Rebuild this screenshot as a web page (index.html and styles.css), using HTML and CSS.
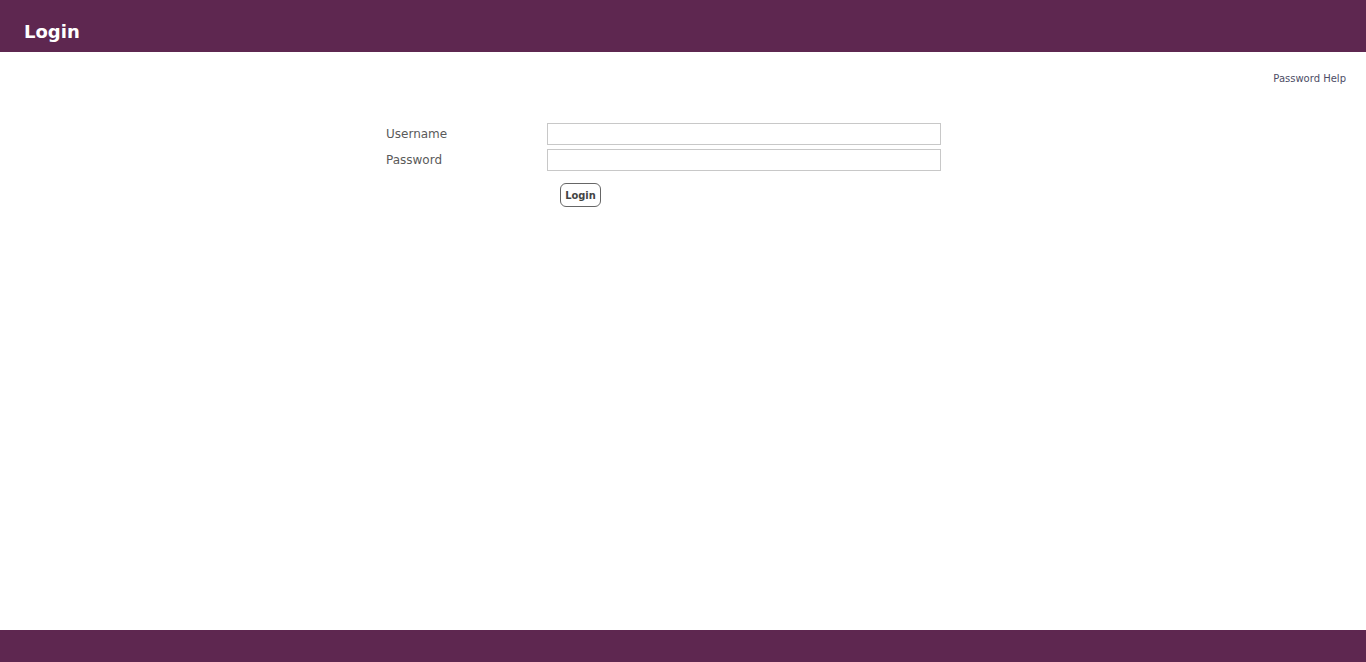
FILE: index.html
```html
<!DOCTYPE html>
<html>
<head>
<meta charset="utf-8">
<title>Login</title>
<link rel="stylesheet" href="styles.css">
</head>
<body>
<div class="page">
  <header class="topbar"><h1 class="title">Login</h1></header>
  <main class="content">
    <div class="helprow"><a class="help" href="#">Password Help</a></div>
    <form class="loginform">
      <label class="lbl" for="u">Username</label>
      <input class="field" id="u" type="text">
      <label class="lbl" for="p">Password</label>
      <input class="field" id="p" type="password">
      <div></div>
      <div class="btnrow"><button class="btn" type="button">Login</button></div>
    </form>
  </main>
  <footer class="bottombar"></footer>
</div>
</body>
</html>
```
FILE: styles.css
```css
html, body { margin: 0; padding: 0; height: 100%; }
body { font-family: "DejaVu Sans", Verdana, sans-serif; background: #fff; }
.page { display: flex; flex-direction: column; min-height: 100vh; }
.topbar { background: #5e2750; height: 52px; display: flex; align-items: center; padding-left: 24px; box-sizing: border-box; }
.title { margin: 0; color: #fff; font-size: 18px; font-weight: bold; padding-top: 10px; }
.content { flex: 1; }
.helprow { display: flex; justify-content: flex-end; padding: 20px 20px 0 0; height: 14px; }
.help { font-size: 10px; color: #4d4d66; text-decoration: none; line-height: 14px; }
.loginform { display: grid; grid-template-columns: 161px 394px; row-gap: 4px; margin-left: 386px; margin-top: 37px; }
.lbl { font-size: 12px; color: #5a5a5a; line-height: 22px; }
.field { box-sizing: border-box; width: 394px; height: 22px; border: 1px solid #c8c8c8; margin: 0; padding: 1px 3px; font: inherit; font-size: 12px; }
.btnrow { padding: 8px 0 0 13px; }
.btn { box-sizing: border-box; width: 41px; height: 24px; border: 1px solid #666; border-radius: 6px; background: #fff; font-family: "DejaVu Sans Condensed", "DejaVu Sans", sans-serif; font-size: 11px; font-weight: bold; color: #444; padding: 0; }
.bottombar { background: #5e2750; height: 32px; }
```
